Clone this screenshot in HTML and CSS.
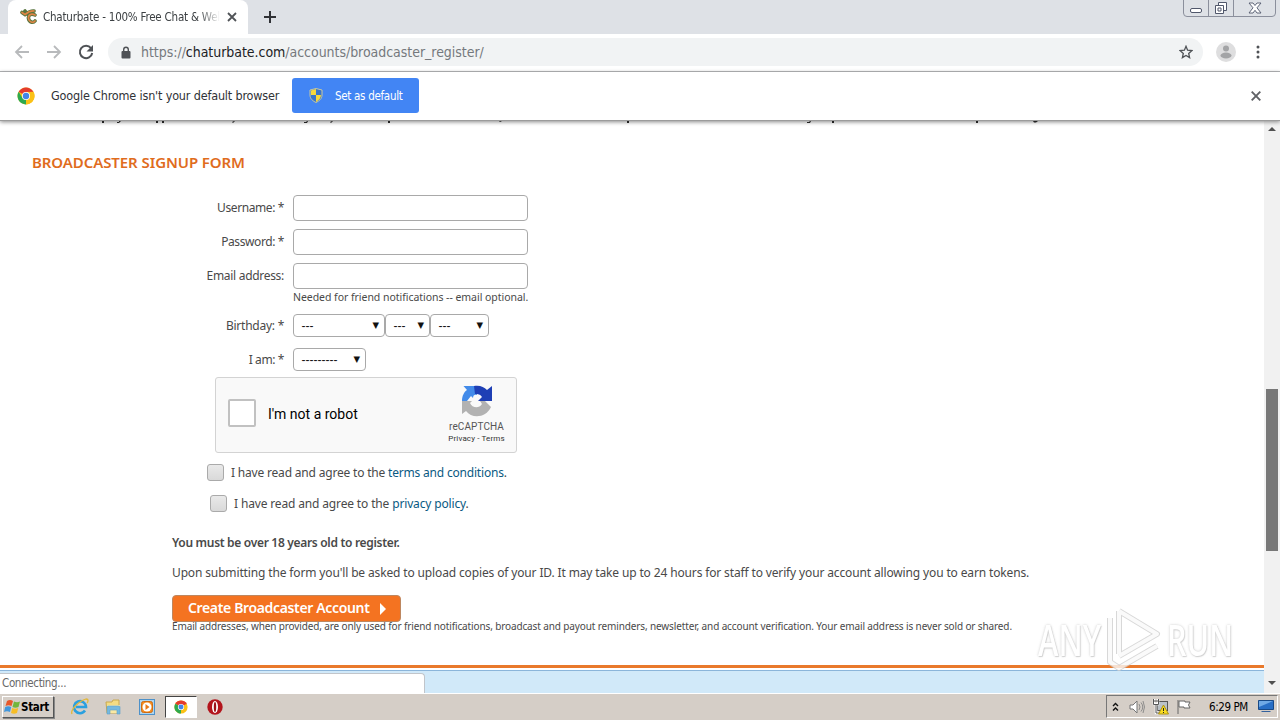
FILE: index.html
```html
<!DOCTYPE html>
<html lang="en">
<head>
<meta charset="utf-8">
<title>Chaturbate - 100% Free Chat &amp; Webcams</title>
<link rel="stylesheet" href="styles.css">
</head>
<body>
<div class="screen">
  <header class="tabstrip">
    <div class="tab">
      <svg class="favicon" width="18" height="16" viewBox="0 0 18 16"><path d="M2 3.500 5 5.500c2-1.500 5-4 9-3.500M5 2l1.500 2M15 6c-4-2-7 0-6.500 3.500C9 13 13 14.500 15 12" fill="none" stroke="#58743e" stroke-width="3.600" stroke-linecap="round"/><path d="M2 3.500 5 5.500c2-1.500 5-4 9-3.500M15 6c-4-2-7 0-6.500 3.500C9 13 13 14.500 15 12" fill="none" stroke="#df8445" stroke-width="1.700" stroke-linecap="round"/></svg>
      <span class="tab-title">Chaturbate - 100% Free Chat &amp; Wel</span>
      <svg class="tab-close" width="10" height="10" viewBox="0 0 10 10"><path d="m1 1 8 8M9 1 1 9" stroke="#505357" stroke-width="1.800"/></svg>
    </div>
    <svg class="new-tab" width="12" height="12" viewBox="0 0 12 12"><path d="M6 0v12M0 6h12" stroke="#303236" stroke-width="2"/></svg>
    <svg class="window-buttons" width="94" height="18" viewBox="0 0 94 18"><path d="M.5 0v13q0 3.500 3.500 3.500h85q3.500 0 3.500-3.500V0M25.500 0v16M50.500 0v16" fill="none" stroke="#8b8f9c"/><g fill="#fff" stroke="#50576b"><rect x="7.500" y="8.500" width="11" height="4" rx="1.500"/><path d="M35.500 2.500h8v8h-8z"/><path d="M32.500 5.500h8v8h-8z"/><path d="M35 8h3v3h-3z"/><path d="M66 3h4l2 2.500L74 3h4l-4 4.800L78 13h-4l-2-2.700L70 13h-4l4-5.200z" stroke-width=".9"/></g></svg>
  </header>
  <nav class="toolbar">
    <svg class="nav-icon" width="16" height="16" viewBox="0 0 16 16"><path d="M15 8H2M8 2 2 8l6 6" fill="none" stroke="#b8babc" stroke-width="1.800"/></svg>
    <svg class="nav-icon" width="16" height="16" viewBox="0 0 16 16"><path d="M1 8h13M8 2l6 6-6 6" fill="none" stroke="#b8babc" stroke-width="1.800"/></svg>
    <svg class="nav-icon" width="16" height="16" viewBox="0 0 16 16"><path d="M13 4.200A6.200 6.200 0 1 0 14.200 9" fill="none" stroke="#4f5256" stroke-width="2"/><path d="M15 1v6.500H8.500z" fill="#4f5256"/></svg>
    <div class="omnibox">
      <svg width="10" height="13" viewBox="0 0 10 13"><rect y="5" x=".5" width="9" height="7.500" rx="1" fill="#4f5256"/><path d="M2.700 5V3.500a2.300 2.300 0 0 1 4.600 0V5" fill="none" stroke="#4f5256" stroke-width="1.400"/></svg>
      <span class="url">https://<b>chaturbate.com</b>/accounts/broadcaster_register/</span>
      <svg class="star" width="14" height="14" viewBox="0 0 14 14"><path d="m7 1.300 1.600 3.900 4.300.4-3.200 2.800.9 4.200L7 10.400l-3.600 2.200.9-4.200L1.100 5.600l4.300-.4z" fill="none" stroke="#4f5256" stroke-width="1.300"/></svg>
    </div>
    <svg class="avatar" width="20" height="20" viewBox="0 0 20 20"><circle cx="10" cy="10" r="10" fill="#dededf"/><circle cx="10" cy="6.500" r="3" fill="#a3a4a6"/><ellipse cx="10" cy="13.500" rx="5.500" ry="3" fill="#a3a4a6"/></svg>
    <svg class="menu-dots" width="4" height="14" viewBox="0 0 4 14"><g fill="#4f5256"><circle cx="2" cy="2" r="1.500"/><circle cx="2" cy="7" r="1.500"/><circle cx="2" cy="12" r="1.500"/></g></svg>
  </nav>
  <div class="infobar">
    <svg width="18" height="18" viewBox="0 0 18 18"><circle cx="9" cy="9" r="8.500" fill="#fbc116"/><path d="M9 9 1.640 4.750A8.500 8.500 0 0 1 16.360 4.750z" fill="#e33b2e"/><path d="M9 9 9 17.500A8.500 8.500 0 0 1 1.640 4.750L5.500 11z" fill="#2da94f"/><path d="M9 9l3.500 2L9 17.500l3 -.5A8.500 8.500 0 0 0 16.400 4.800L9 5z" fill="#fbc116"/><circle cx="9" cy="9" r="4" fill="#fff"/><circle cx="9" cy="9" r="3.200" fill="#4285e8"/></svg>
    <span class="info-text">Google Chrome isn't your default browser</span>
    <button class="default-btn"><svg width="14" height="15" viewBox="0 0 14 15"><path d="M7 .5 13 2v5c0 4-3 6-6 7.500C4 13 1 11 1 7V2z" fill="#3a75c9" stroke="#c9c9a1"/><path d="M7 1 2 2.500V7h5zM7 7h5c0 3-2 5-5 7z" fill="#f8d83c"/></svg><span>Set as default</span></button>
    <svg class="info-close" width="10" height="10" viewBox="0 0 10 10"><path d="m.7.7 8.600 8.600M9.300.7.700 9.300" stroke="#606266" stroke-width="1.900"/></svg>
  </div>
  <div class="viewport">
    <main class="page">
      <svg class="cut-line" width="1264" height="4" viewBox="0 0 1264 4"><path d="M102 0h2v2h-2zM117 1h2V0h2l-2 2h-2zM156 0h2v2h-2zM162 0h2v2h-2zM232 1l2-1h1l-2 2zM304 1h2l1-1h1l-1 2h-3zM330 1l2-1h1l-2 2zM388 0h2v2h-2zM499 0h3l-2 1zM627 0h2v2h-2zM807 1h2l1-1h1l-1 2h-3zM832 0h2v2h-2zM976 0h2v2h-2zM1033 0h5l-2 1.500h-2z" fill="#222"/></svg>
      <h1 class="heading">BROADCASTER SIGNUP FORM</h1>
      <form class="form">
        <div class="row"><label class="l1">Username: *</label><input class="field" type="text"></div>
        <div class="row"><label class="l2">Password: *</label><input class="field" type="text"></div>
        <div class="row last"><label class="l3">Email address:</label><input class="field" type="text"></div>
        <p class="help"><span>Needed for friend notifications -- email optional.</span></p>
        <div class="row selects"><label class="l4">Birthday: *</label><span class="select month">---<i>▼</i></span><span class="select day">---<i>▼</i></span><span class="select year">---<i>▼</i></span></div>
        <div class="row selects"><label class="l5">I am: *</label><span class="select gender">---------<i>▼</i></span></div>
        <section class="captcha">
          <span class="captcha-box"></span>
          <span class="captcha-label">I'm not a robot</span>
          <div class="captcha-brand">
            <svg width="32" height="32" viewBox="0 0 32 32"><path d="M1 16C1 11 3 7 6 5L2.500 1H16V10c-2-1-4 0-4 3l-2-2-4 5z" fill="#438be9"/><path d="M13 1c6-1 10 1 13 4l5-4v15H17l4-4c-2-3-4-3-7-3z" fill="#1e3fb5"/><path d="M1 16h10l-2 2c2 5 9 6 12 1l-2-3h5l6 6c-5 11-19 12-25 4l-4 3z" fill="#b2b2b2"/></svg>
            <span class="brand-name">reCAPTCHA</span>
            <span class="brand-links">Privacy - Terms</span>
          </div>
        </section>
        <div class="agree"><span class="check"></span><span class="a1">I have read and agree to the <a>terms and conditions</a>.</span></div>
        <div class="agree second"><span class="check"></span><span class="a2">I have read and agree to the <a>privacy policy</a>.</span></div>
        <p class="age"><span>You must be over 18 years old to register.</span></p>
        <p class="upload"><span>Upon submitting the form you'll be asked to upload copies of your ID. It may take up to 24 hours for staff to verify your account allowing you to earn tokens.</span></p>
        <button class="create"><span>Create Broadcaster Account</span><svg width="6" height="12" viewBox="0 0 6 12"><path d="M0 0v12l6-6z" fill="#fff"/></svg></button>
        <p class="note"><span>Email addresses, when provided, are only used for friend notifications, broadcast and payout reminders, newsletter, and account verification. Your email address is never sold or shared.</span></p>
      </form>
      <footer class="page-footer"><div class="status"><span>Connecting...</span></div></footer>
      <div class="watermark">
        <span>ANY</span>
        <svg width="60" height="66" viewBox="0 0 60 66"><g fill="none" stroke-linejoin="round"><path d="M14 4v43M14 4l38 23-38 22M5 11v44l9 6 38-22" stroke="#cfcfcf" stroke-width="6"/><path d="M14 4v43M14 4l38 23-38 22M5 11v44l9 6 38-22" stroke="#fafafa" stroke-width="4"/></g></svg>
        <span>RUN</span>
      </div>
    </main>
    <aside class="scrollbar"><svg width="8" height="4" viewBox="0 0 8 4"><path d="M0 4h8L4 0z" fill="#505050"/></svg><i class="thumb"></i><svg width="8" height="4" viewBox="0 0 8 4"><path d="M0 0h8L4 4z" fill="#505050"/></svg></aside>
  </div>
  <footer class="taskbar">
    <div class="start"><svg width="17" height="16" viewBox="0 0 17 16"><path d="M3 2q3-2 6 0L7.500 7q-3-1.500-6 0z" fill="#e8582a"/><path d="M10 2.500q3 1.500 6 0L14.500 8q-3 1.500-6 0z" fill="#72b63c"/><path d="M1.200 8q3-1.500 6 0L6 13q-3-1.500-6 0z" fill="#4297dc"/><path d="M8.200 9q3 1.500 6 0L13 14q-3 1.500-6 0z" fill="#f7bd25"/></svg><b>Start</b></div>
    <svg class="ie" width="18" height="18" viewBox="0 0 18 18"><path d="M14 12.500A6 6 0 1 1 15 9H5" fill="none" stroke="#2aa0df" stroke-width="2.600"/><path d="M1 16C-1 12 8 3 15 1c3 0 2 3 1 4" fill="none" stroke="#e3b839" stroke-width="1.300"/></svg>
    <svg class="folder" width="17" height="16" viewBox="0 0 17 16"><path d="M1 3h6l1-2h6v13H2z" fill="#f3dc83" stroke="#c9a94e"/><path d="M2 6h13v8H2z" fill="#fae9a3"/><path d="M2 14V8q0-1 1-1h11q1 0 1 1v7h-3v-4H5v4H2z" fill="#75b9df" stroke="#5c9fc9" stroke-width=".6"/></svg>
    <svg class="player" width="16" height="16" viewBox="0 0 16 16"><rect x=".5" y=".5" width="15" height="15" fill="#aed5ef" stroke="#4d91c9"/><rect x="2.500" y="2.500" width="11" height="11" rx="2" fill="#f58c1f" stroke="#cf6b13"/><circle cx="8" cy="8" r="4.500" fill="#fff"/><path d="M6.500 5v6l4-3z" fill="#e87918"/></svg>
    <div class="active-task"><svg width="14" height="14" viewBox="0 0 18 18"><circle cx="9" cy="9" r="8.500" fill="#fbc116"/><path d="M9 9 1.640 4.750A8.500 8.500 0 0 1 16.360 4.750z" fill="#e33b2e"/><path d="M9 9v8.500A8.500 8.500 0 0 1 1.640 4.750z" fill="#2da94f"/><circle cx="9" cy="9" r="4" fill="#fff"/><circle cx="9" cy="9" r="3.200" fill="#4285e8"/></svg></div>
    <svg class="opera" width="16" height="16" viewBox="0 0 16 16"><circle cx="8" cy="8" r="7.700" fill="#b3141c"/><ellipse cx="8" cy="8" rx="3" ry="6" fill="#fff"/><ellipse cx="8" cy="8" rx="1.200" ry="5" fill="#9e1118"/></svg>
    <div class="tray">
      <svg width="7" height="10" viewBox="0 0 7 10"><path d="m1 4 2.500-2.500L6 4M1 8.500 3.500 6 6 8.500" fill="none" stroke="#111" stroke-width="1.400"/></svg>
      <svg class="speaker" width="16" height="14" viewBox="0 0 16 14"><path d="M1 5h3l4-4v12L4 9H1z" fill="#fff" stroke="#777"/><path d="M10 4q2 3 0 6M12 2.500q3.500 4.500 0 9M14 1q3 6 0 12" fill="none" stroke="#858585" stroke-width=".9"/></svg>
      <svg class="network" width="17" height="16" viewBox="0 0 17 16"><rect x="5.500" y="2.500" width="10" height="9" fill="#bac1c7" stroke="#555"/><path d="M2 0v5h4V0M4 5v9h6" fill="none" stroke="#fff" stroke-width="2.500"/><path d="M1.500 0v5.500h5V0M4 6v8h5M3 1v2m2-2v2" fill="none" stroke="#555"/><path d="m11.500 6 5 9h-10z" fill="#f9dc20" stroke="#ad9210"/><path d="M11.500 9v3m0 1v1" stroke="#222"/></svg>
      <svg class="flag" width="16" height="16" viewBox="0 0 16 16"><path d="M2 1v14M3 2h6v1h5l-1.500 3L14 9H8V8H3z" fill="#fff" stroke="#666"/></svg>
      <time>6:29 PM</time>
      <svg class="desktop" width="16" height="13" viewBox="0 0 16 13"><path d="M.5.500h15v9H.500z" fill="#286ec5" stroke="#184986"/><path d="M1 1h14L1 7z" fill="#70a9e5"/><path d="M4 11h8l1 1H3z" fill="#34619d"/></svg>
    </div>
  </footer>
</div>
</body>
</html>
```
FILE: styles.css
```css
* { box-sizing: border-box; }
body { margin: 0; overflow: hidden; background: #fff; font-family: "Noto Sans", sans-serif; color: #494949; }
svg { display: block; flex: none; }
p, h1 { margin: 0; }
button { border: 0; padding: 0; font-family: inherit; }
.screen { width: 1280px; height: 720px; display: flex; flex-direction: column; }
.tabstrip, .toolbar, .infobar { font-family: "DejaVu Sans Condensed", "DejaVu Sans", sans-serif; font-stretch: condensed; flex: none; display: flex; }
.tabstrip { height: 34px; background: #dee1e6; align-items: flex-start; }
.tab { width: 240px; height: 34px; margin-left: 8px; padding-left: 12px; display: flex; align-items: center; background: #fff; border-radius: 8px 8px 0 0; }
.tab-title { width: 177px; margin-left: 5px; font-size: 11.5px; letter-spacing: -.22px; color: #3c4043; white-space: nowrap; -webkit-mask-image: linear-gradient(90deg, #000 88%, transparent); }
.tab-close { margin-left: 7px; }
.new-tab { margin: 11px 0 0 16px; }
.window-buttons { margin-left: auto; margin-right: 3px; }
.toolbar { height: 38px; padding: 0 0 1px 14px; align-items: center; border-bottom: 1px solid #b0b2b4; }
.nav-icon { margin-right: 16px; }
.omnibox { width: 1095px; height: 28px; margin-left: -2px; padding-left: 13px; border-radius: 14px; background: #f1f3f4; display: flex; align-items: center; }
.url { margin-left: 10px; font-size: 14px; color: #75797d; white-space: nowrap; letter-spacing: -.04px; }
.url b { color: #202124; font-weight: 400; }
.star { margin-left: auto; margin-right: 10px; }
.avatar { margin-left: 13px; }
.menu-dots { margin-left: 20px; }
.infobar { height: 49px; align-items: center; padding: 0 19px 1px 17px; border-bottom: 1px solid #9b9b9b; background: #fff; box-shadow: 0 1px 4px #888; z-index: 1; }
.info-text { width: 229px; margin-left: 16px; font-size: 12.5px; letter-spacing: -.17px; color: #303236; white-space: nowrap; }
.default-btn { width: 127px; height: 35px; margin-left: 12px; padding-left: 17px; display: flex; align-items: center; background: #4285f4; border-radius: 3px; color: #fff; font-size: 11.5px; white-space: nowrap; }
.default-btn span { margin-left: 12px; letter-spacing: -.3px; }
.info-close { margin-left: auto; }
.viewport { height: 572px; flex: none; display: flex; overflow: hidden; }
.page { width: 1264px; position: relative; }
.cut-line { margin-bottom: 27px; position: relative; z-index: 2; }
.heading { height: 20px; line-height: 20px; margin: 0 0 23px 32px; color: #e06c1d; font-size: 15px; font-weight: 600; letter-spacing: -.08px; white-space: nowrap; }
.form { height: 470px; }
.row { display: flex; align-items: center; height: 26px; margin-bottom: 8px; }
.row.last { margin-bottom: 0; }
.row label { width: 284px; margin-right: 9px; padding-bottom: 1px; text-align: right; font-size: 12px; letter-spacing: -.4px; white-space: nowrap; }
.row .l3 { letter-spacing: -.3px; }
.row .l4 { letter-spacing: -.25px; }
.field { width: 235px; height: 26px; border: 1px solid #a9a9a9; border-radius: 4px; background: #fff; }
.help { height: 25px; line-height: 17px; padding-left: 293px; font-size: 10.5px; letter-spacing: -.04px; white-space: nowrap; }
.selects { height: 23px; margin-bottom: 11px; }
.selects label { padding-bottom: 0; }
.select { height: 23px; border: 1px solid #a9a9a9; border-radius: 4px; display: flex; align-items: center; padding: 0 5px 0 7.5px; color: #111; font: 12px "Liberation Sans", sans-serif; }
.select i { margin-left: auto; margin-top: -2px; font: 8.500px "DejaVu Sans", sans-serif; }
.month { width: 92px; } .day { width: 45px; } .year { width: 59px; } .gender { width: 73px; }
.captcha { width: 302px; height: 76px; margin: -5px 0 11px 215px; padding: 0 11px 0 12px; display: flex; align-items: center; background: #f9f9f9; border: 1px solid #d3d3d3; border-radius: 3px; font-family: Roboto, sans-serif; }
.captcha-box { width: 28px; height: 28px; margin-top: -4px; border: 2px solid #c1c1c1; border-radius: 2px; background: #fff; }
.captcha-label { margin: -2px 0 0 12px; font-size: 14px; color: #000; white-space: nowrap; }
.captcha-brand { margin-left: auto; margin-top: -1px; width: 57px; display: flex; flex-direction: column; align-items: center; color: #555; white-space: nowrap; }
.brand-name { height: 13px; margin-top: 3px; line-height: 13px; font-size: 10px; letter-spacing: .1px; }
.brand-links { height: 12px; line-height: 12px; font-size: 8px; letter-spacing: .13px; color: #333; }
.agree { height: 17px; margin: 0 0 14px 207px; display: flex; align-items: center; font-size: 12px; letter-spacing: -.19px; white-space: nowrap; }
.agree.second { margin-left: 210px; margin-bottom: 21px; letter-spacing: -.15px; }
.agree span:last-child { margin-left: 7px; margin-top: -1px; }
.agree a { color: #0a5a83; }
.check { width: 17px; height: 17px; background: linear-gradient(#e9e9e9, #d9d9d9); border: 1px solid #aaa; border-radius: 3px; }
.age, .upload { height: 20px; line-height: 20px; margin-left: 172px; font-size: 12px; letter-spacing: -.14px; white-space: nowrap; }
.age { font-weight: 600; margin-bottom: 10px; letter-spacing: -.31px; }
.create { width: 229px; height: 27px; margin: 12px 0 0 172px; padding: 0 14px 2px 15px; display: flex; align-items: center; justify-content: space-between; background: #f47321; border: 1px solid #bd8760; border-radius: 4px; color: #fff; font-size: 14px; font-weight: 600; letter-spacing: -.35px; white-space: nowrap; }
.create svg { margin-top: 3px; }
.note { height: 12px; margin-left: 172px; margin-top: -2px; line-height: 13px; font-size: 10px; letter-spacing: -.126px; white-space: nowrap; }
.page-footer { position: relative; height: 28px; padding-top: 8px; background: linear-gradient(#e9792b 0 3px, #fff 3px 5px, #8bb5da 5px 6px, #d1e9f9 6px); }
.status { height: 20px; width: 425px; padding-left: 2px; background: #fff; border: 1px solid #c1c5ca; border-left: 0; border-bottom: 0; border-radius: 0 4px 0 0; color: #686868; font: 11.5px/19px "DejaVu Sans Condensed", sans-serif; letter-spacing: -.35px; }
.watermark { position: absolute; left: 1038px; top: 486px; width: 194px; display: flex; align-items: center; justify-content: space-between; opacity: .8; }
.watermark span { font: 600 43px/60px "Open Sans", sans-serif; color: #fff; text-shadow: 0 0 3px #bbb, 1px 1px 1px #ccc; display: block; transform: scaleX(.72); transform-origin: left; width: 65px; }
.watermark span:last-child { transform: scaleX(.71); }
.scrollbar { width: 16px; padding: 6px 0 8px; display: flex; flex-direction: column; align-items: center; background: #f1f1f1; }
.thumb { width: 12px; height: 162px; margin: 258px 0 auto; background: #787878; }
.taskbar { height: 27px; flex: none; padding: 0 2px 1px 2px; display: flex; align-items: center; background: #d5cec7; border-top: 1px solid #fff; font-family: "DejaVu Sans Condensed", sans-serif; color: #000; }
.start { width: 52px; height: 22px; padding-left: 1px; display: flex; align-items: center; border: 1px solid; border-color: #fff #555 #555 #fff; box-shadow: 1px 1px #888; }
.start b { margin-left: 0; font-size: 11.5px; letter-spacing: -.3px; }
.ie { margin-left: 17px; } .folder { margin-left: 16px; } .player { margin-left: 17px; }
.active-task { width: 32px; height: 22px; margin: 0 10px; display: grid; place-items: center; background: #fff; border: 1px solid; border-color: #444 #fff #fff #444; }
.tray { width: 172px; height: 23px; padding: 0 3px 0 5px; margin-left: auto; display: flex; align-items: center; border: 1px solid; border-color: #777 #fff #fff #777; }
.speaker { margin-left: 10px; } .network { margin-left: 7px; } .flag { margin-left: 7px; }
.tray time { margin-left: 17px; font-size: 11.5px; letter-spacing: -.4px; white-space: nowrap; }
.desktop { margin-left: auto; }
```
